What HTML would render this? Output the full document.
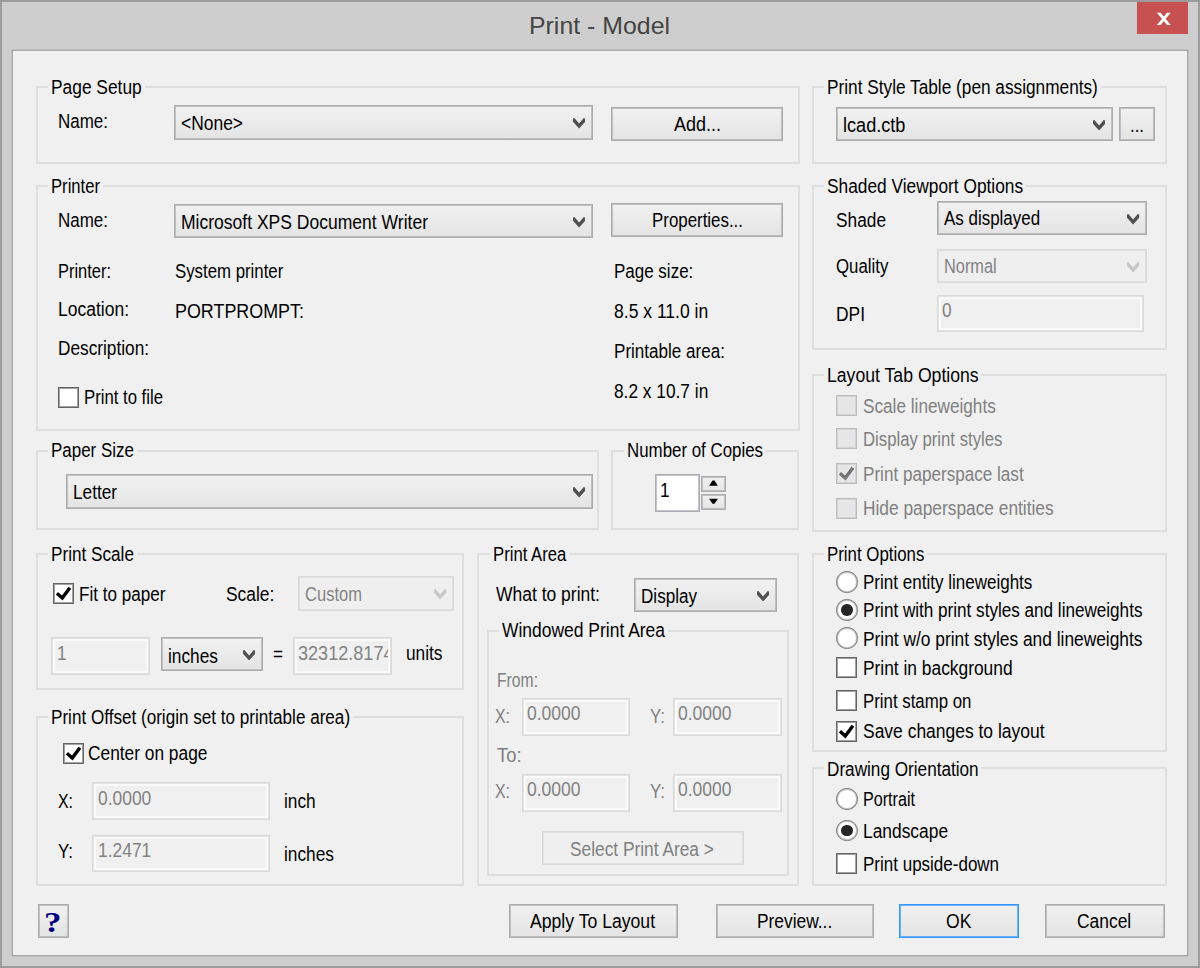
<!DOCTYPE html>
<html><head><meta charset="utf-8"><title>Print - Model</title>
<style>
html,body{margin:0;padding:0}
body{width:1200px;height:968px;overflow:hidden;position:relative;background:#cecece;font-family:"Liberation Sans",sans-serif;font-size:20px;line-height:1}
div,span.t,span.q{position:absolute;box-sizing:border-box}
.win{left:0;top:0;width:1200px;height:968px;border:2px solid #9c9c9c;border-top-width:2px;background:#cecece}
.content{left:12px;top:50px;width:1176px;height:906px;background:#f0f0f0;border:1px solid #a8a8a8;box-shadow:0 0 0 1px rgba(150,150,150,.3)}
.t{white-space:nowrap;transform-origin:0 0;color:#000}
.ttl{letter-spacing:0}
.close{background:#c75050}
.close svg{position:absolute;left:0;top:0;width:100%;height:100%}
.sp svg{position:absolute;left:-1px;top:-1px;width:25px;height:16px}
.ck svg{position:absolute;left:-1px;top:-1px;width:21px;height:21px}
.g{border:2px solid #dedede}
.m{background:#f0f0f0}
.cb{border:1px solid #acacac;box-shadow:inset 0 0 0 1px rgba(172,172,172,.7);background:linear-gradient(#f1f1f1,#e4e4e4)}
.cb.d{border-color:#d9d9d9;background:#efefef;box-shadow:inset 0 0 0 1px rgba(217,217,217,.7)}
.cv{position:absolute;right:6.8px;top:50%;margin-top:-4.2px;width:12.2px;height:10.5px}
.b{border:1px solid #acacac;box-shadow:inset 0 0 0 1px rgba(172,172,172,.7);background:linear-gradient(#f1f1f1,#e4e4e4)}
.b.d{border-color:#d9d9d9;background:#efefef;box-shadow:inset 0 0 0 1px rgba(217,217,217,.7)}
.b.f{border-color:#3399ff;box-shadow:inset 0 0 0 1px rgba(51,153,255,.7)}
.e{border:1px solid #abadb3;background:#fff;box-shadow:inset 0 0 0 1px rgba(171,173,179,.7)}
.e.d{border:1px solid #d9d9d9;background:#f0f0f0;box-shadow:inset 0 0 0 1px rgba(217,217,217,.7),inset 0 0 0 3px #fafafa}
.sp{border:1px solid #acacac;box-shadow:inset 0 0 0 1px rgba(172,172,172,.7);background:linear-gradient(#f1f1f1,#e4e4e4)}
.ck{border:1px solid #646464;background:#fff;box-shadow:inset 0 0 0 1px rgba(100,100,100,.6)}
.ck.d{border-color:#bcbcbc;background:#e6e6e6;box-shadow:inset 0 0 0 1px rgba(188,188,188,.45)}
.rd{border:1px solid #707070;background:#fff;border-radius:50%;box-shadow:inset 0 0 0 1px rgba(112,112,112,.45)}
.rd i{position:absolute;left:4px;top:4px;width:11.5px;height:11.5px;border-radius:50%;background:#262626}
.q{font-family:"Liberation Serif",serif;font-weight:bold;font-size:29px;color:#000080;line-height:1;transform-origin:0 0;transform:scaleX(1.2)}
</style></head>
<body>
<div class="win"></div>
<div class="content"></div>
<div class="close" style="left:1137.0px;top:2.0px;width:51.3px;height:32.0px;"><svg viewBox="0 0 51.3 32"><path d="M19.9 10.75 L23.6 10.75 L33.7 23 L30 23 Z M30 10.75 L33.7 10.75 L23.6 23 L19.9 23 Z" fill="#fff"/></svg></div>
<span class="t ttl" style="left:529.0px;top:14.9px;transform:scaleX(1.050);color:#444;font-size:23.7px;">Print - Model</span>
<div class="g" style="left:36.0px;top:86.0px;width:764.0px;height:78.0px;"></div>
<div class="m" style="left:48.0px;top:85.0px;width:96.7px;height:4.0px;"></div>
<span class="t" style="left:51.0px;top:76.6px;transform:scaleX(0.868);">Page Setup</span>
<span class="t" style="left:58.0px;top:111.3px;transform:scaleX(0.849);">Name:</span>
<div class="cb" style="left:174.0px;top:105.0px;width:418.5px;height:35.0px;"><svg class="cv" viewBox="0 0 7 6"><path d="M0 0.3 L0.8 0 L3.5 3.1 L6.2 0 L7 0.3 L7 2.1 L3.5 6 L0 2.1 Z" fill="#505050"/></svg></div>
<span class="t" style="left:181.0px;top:113.1px;transform:scaleX(0.871);">&lt;None&gt;</span>
<div class="b" style="left:610.7px;top:107.3px;width:172.6px;height:33.7px;"></div>
<span class="t" style="left:673.5px;top:114.1px;transform:scaleX(0.899);">Add...</span>
<div class="g" style="left:36.0px;top:185.0px;width:764.0px;height:246.0px;"></div>
<div class="m" style="left:48.0px;top:184.0px;width:55.0px;height:4.0px;"></div>
<span class="t" style="left:51.0px;top:175.6px;transform:scaleX(0.832);">Printer</span>
<span class="t" style="left:58.0px;top:210.1px;transform:scaleX(0.849);">Name:</span>
<div class="cb" style="left:174.0px;top:204.0px;width:418.5px;height:34.4px;"><svg class="cv" viewBox="0 0 7 6"><path d="M0 0.3 L0.8 0 L3.5 3.1 L6.2 0 L7 0.3 L7 2.1 L3.5 6 L0 2.1 Z" fill="#505050"/></svg></div>
<span class="t" style="left:181.0px;top:211.7px;transform:scaleX(0.876);">Microsoft XPS Document Writer</span>
<div class="b" style="left:610.7px;top:202.7px;width:172.6px;height:34.0px;"></div>
<span class="t" style="left:651.5px;top:209.5px;transform:scaleX(0.844);">Properties...</span>
<span class="t" style="left:58.0px;top:260.8px;transform:scaleX(0.822);">Printer:</span>
<span class="t" style="left:175.0px;top:260.8px;transform:scaleX(0.840);">System printer</span>
<span class="t" style="left:58.0px;top:299.1px;transform:scaleX(0.875);">Location:</span>
<span class="t" style="left:175.0px;top:300.6px;transform:scaleX(0.895);">PORTPROMPT:</span>
<span class="t" style="left:58.0px;top:338.1px;transform:scaleX(0.862);">Description:</span>
<div class="ck" style="left:58.0px;top:387.0px;width:21.0px;height:21.0px;"></div>
<span class="t" style="left:84.3px;top:387.4px;transform:scaleX(0.836);">Print to file</span>
<span class="t" style="left:614.0px;top:260.8px;transform:scaleX(0.849);">Page size:</span>
<span class="t" style="left:614.0px;top:300.8px;transform:scaleX(0.877);">8.5 x 11.0 in</span>
<span class="t" style="left:614.0px;top:341.4px;transform:scaleX(0.853);">Printable area:</span>
<span class="t" style="left:614.0px;top:380.8px;transform:scaleX(0.865);">8.2 x 10.7 in</span>
<div class="g" style="left:36.0px;top:450.0px;width:563.0px;height:80.0px;"></div>
<div class="m" style="left:48.0px;top:449.0px;width:89.0px;height:4.0px;"></div>
<span class="t" style="left:51.0px;top:440.4px;transform:scaleX(0.848);">Paper Size</span>
<div class="cb" style="left:65.5px;top:474.0px;width:527.0px;height:34.6px;"><svg class="cv" viewBox="0 0 7 6"><path d="M0 0.3 L0.8 0 L3.5 3.1 L6.2 0 L7 0.3 L7 2.1 L3.5 6 L0 2.1 Z" fill="#505050"/></svg></div>
<span class="t" style="left:72.5px;top:481.9px;transform:scaleX(0.860);">Letter</span>
<div class="g" style="left:611.0px;top:450.0px;width:188.0px;height:80.0px;"></div>
<div class="m" style="left:623.7px;top:449.0px;width:142.0px;height:4.0px;"></div>
<span class="t" style="left:626.7px;top:440.4px;transform:scaleX(0.844);">Number of Copies</span>
<div class="e" style="left:655.0px;top:474.0px;width:44.7px;height:38.0px;"></div>
<span class="t" style="left:660.3px;top:480.0px;transform:scaleX(0.865);">1</span>
<div class="sp" style="left:701.0px;top:476.0px;width:25.0px;height:16.0px;"><svg viewBox="0 0 25 16"><path d="M8.1 9.7 L11.5 4.4 L13.5 4.4 L16.9 9.7 Z" fill="#000"/></svg></div>
<div class="sp" style="left:701.0px;top:494.0px;width:25.0px;height:16.0px;"><svg viewBox="0 0 25 16"><path d="M8.1 4.75 L16.9 4.75 L13.5 9.75 L11.5 9.75 Z" fill="#000"/></svg></div>
<div class="g" style="left:36.0px;top:553.0px;width:428.0px;height:137.0px;"></div>
<div class="m" style="left:48.0px;top:552.0px;width:89.0px;height:4.0px;"></div>
<span class="t" style="left:51.0px;top:544.1px;transform:scaleX(0.858);">Print Scale</span>
<div class="ck" style="left:53.0px;top:583.0px;width:21.0px;height:21.0px;"><svg viewBox="0 0 21 21"><path d="M3.9 10.3 L9.3 15 L16.9 4.7" fill="none" stroke="#000" stroke-width="3.4"/></svg></div>
<span class="t" style="left:79.3px;top:583.8px;transform:scaleX(0.854);">Fit to paper</span>
<span class="t" style="left:226.0px;top:583.8px;transform:scaleX(0.869);">Scale:</span>
<div class="cb d" style="left:298.0px;top:576.3px;width:156.4px;height:34.4px;"><svg class="cv" viewBox="0 0 7 6"><path d="M0 0.3 L0.8 0 L3.5 3.1 L6.2 0 L7 0.3 L7 2.1 L3.5 6 L0 2.1 Z" fill="#c8c8c8"/></svg></div>
<span class="t" style="left:305.0px;top:584.3px;transform:scaleX(0.827);color:#838383;">Custom</span>
<div class="e d" style="left:51.0px;top:637.0px;width:98.6px;height:38.0px;"></div>
<span class="t" style="left:56.6px;top:642.7px;transform:scaleX(0.865);color:#838383;">1</span>
<div class="cb" style="left:161.4px;top:637.3px;width:101.8px;height:33.7px;"><svg class="cv" viewBox="0 0 7 6"><path d="M0 0.3 L0.8 0 L3.5 3.1 L6.2 0 L7 0.3 L7 2.1 L3.5 6 L0 2.1 Z" fill="#505050"/></svg></div>
<span class="t" style="left:168.4px;top:646.1px;transform:scaleX(0.865);"></span>
<span class="t" style="left:167.5px;top:646.1px;transform:scaleX(0.865);">inches</span>
<span class="t" style="left:273.3px;top:644.3px;transform:scaleX(0.856);">=</span>
<div class="e d" style="left:293.0px;top:637.0px;width:99.0px;height:38.0px;"></div>
<span class="t" style="left:298.3px;top:643.1px;transform:scaleX(0.865);color:#838383;"></span>
<div style="left:296px;top:640px;width:92.3px;height:32px;overflow:hidden">
<span class="t" style="left:2.3px;top:2.5px;transform:scaleX(0.904);color:#838383;">32312.8174</span>
</div>
<span class="t" style="left:405.7px;top:643.3px;transform:scaleX(0.864);">units</span>
<div class="g" style="left:36.0px;top:716.0px;width:428.0px;height:170.0px;"></div>
<div class="m" style="left:48.0px;top:715.0px;width:305.0px;height:4.0px;"></div>
<span class="t" style="left:51.0px;top:707.4px;transform:scaleX(0.855);">Print Offset (origin set to printable area)</span>
<div class="ck" style="left:62.7px;top:743.0px;width:21.0px;height:21.0px;"><svg viewBox="0 0 21 21"><path d="M3.9 10.3 L9.3 15 L16.9 4.7" fill="none" stroke="#000" stroke-width="3.4"/></svg></div>
<span class="t" style="left:88.3px;top:743.1px;transform:scaleX(0.866);">Center on page</span>
<span class="t" style="left:57.7px;top:790.8px;transform:scaleX(0.794);">X:</span>
<div class="e d" style="left:92.0px;top:782.0px;width:178.0px;height:37.6px;"></div>
<span class="t" style="left:97.5px;top:787.6px;transform:scaleX(0.871);color:#838383;">0.0000</span>
<span class="t" style="left:284.3px;top:790.8px;transform:scaleX(0.864);">inch</span>
<span class="t" style="left:57.7px;top:840.6px;transform:scaleX(0.843);">Y:</span>
<div class="e d" style="left:92.0px;top:835.0px;width:178.0px;height:37.0px;"></div>
<span class="t" style="left:97.5px;top:840.4px;transform:scaleX(0.871);color:#838383;">1.2471</span>
<span class="t" style="left:284.3px;top:843.8px;transform:scaleX(0.865);">inches</span>
<div class="g" style="left:477.0px;top:553.0px;width:322.0px;height:333.0px;"></div>
<div class="m" style="left:489.7px;top:552.0px;width:79.3px;height:4.0px;"></div>
<span class="t" style="left:492.7px;top:544.1px;transform:scaleX(0.835);">Print Area</span>
<span class="t" style="left:496.0px;top:583.8px;transform:scaleX(0.874);">What to print:</span>
<div class="cb" style="left:633.7px;top:578.0px;width:143.3px;height:34.0px;"><svg class="cv" viewBox="0 0 7 6"><path d="M0 0.3 L0.8 0 L3.5 3.1 L6.2 0 L7 0.3 L7 2.1 L3.5 6 L0 2.1 Z" fill="#505050"/></svg></div>
<span class="t" style="left:640.7px;top:585.9px;transform:scaleX(0.854);">Display</span>
<div class="g" style="left:487.0px;top:630.0px;width:302.0px;height:246.0px;"></div>
<div class="m" style="left:499.4px;top:629.0px;width:169.0px;height:4.0px;"></div>
<span class="t" style="left:502.4px;top:620.3px;transform:scaleX(0.873);">Windowed Print Area</span>
<span class="t" style="left:496.6px;top:669.8px;transform:scaleX(0.785);color:#808080;">From:</span>
<span class="t" style="left:495.0px;top:705.5px;transform:scaleX(0.794);color:#808080;">X:</span>
<div class="e d" style="left:521.5px;top:698.0px;width:108.9px;height:38.0px;"></div>
<span class="t" style="left:527.2px;top:703.3px;transform:scaleX(0.876);color:#838383;">0.0000</span>
<span class="t" style="left:649.6px;top:705.5px;transform:scaleX(0.843);color:#808080;">Y:</span>
<div class="e d" style="left:672.6px;top:698.0px;width:109.4px;height:38.0px;"></div>
<span class="t" style="left:678.4px;top:703.3px;transform:scaleX(0.876);color:#838383;">0.0000</span>
<span class="t" style="left:496.6px;top:744.8px;transform:scaleX(0.918);color:#808080;">To:</span>
<span class="t" style="left:495.0px;top:781.1px;transform:scaleX(0.794);color:#808080;">X:</span>
<div class="e d" style="left:521.5px;top:774.0px;width:108.9px;height:37.8px;"></div>
<span class="t" style="left:527.2px;top:779.1px;transform:scaleX(0.876);color:#838383;">0.0000</span>
<span class="t" style="left:649.6px;top:781.1px;transform:scaleX(0.843);color:#808080;">Y:</span>
<div class="e d" style="left:672.6px;top:774.0px;width:109.4px;height:37.8px;"></div>
<span class="t" style="left:678.4px;top:779.1px;transform:scaleX(0.876);color:#838383;">0.0000</span>
<div class="b d" style="left:541.5px;top:831.4px;width:202.0px;height:34.1px;"></div>
<span class="t" style="left:570.0px;top:838.7px;transform:scaleX(0.866);color:#808080;">Select Print Area &gt;</span>
<div class="g" style="left:812.0px;top:86.0px;width:355.0px;height:78.0px;"></div>
<div class="m" style="left:823.7px;top:85.0px;width:277.0px;height:4.0px;"></div>
<span class="t" style="left:826.7px;top:76.6px;transform:scaleX(0.862);">Print Style Table (pen assignments)</span>
<div class="cb" style="left:835.7px;top:107.0px;width:277.0px;height:34.0px;"><svg class="cv" viewBox="0 0 7 6"><path d="M0 0.3 L0.8 0 L3.5 3.1 L6.2 0 L7 0.3 L7 2.1 L3.5 6 L0 2.1 Z" fill="#505050"/></svg></div>
<span class="t" style="left:842.7px;top:114.8px;transform:scaleX(0.905);">lcad.ctb</span>
<div class="b" style="left:1119.3px;top:107.0px;width:36.0px;height:34.0px;"></div>
<span class="t" style="left:1130.3px;top:114.6px;transform:scaleX(0.840);">...</span>
<div class="g" style="left:812.0px;top:185.0px;width:355.0px;height:165.0px;"></div>
<div class="m" style="left:823.7px;top:184.0px;width:202.0px;height:4.0px;"></div>
<span class="t" style="left:826.7px;top:175.8px;transform:scaleX(0.866);">Shaded Viewport Options</span>
<span class="t" style="left:836.0px;top:209.8px;transform:scaleX(0.865);">Shade</span>
<div class="cb" style="left:937.0px;top:201.4px;width:210.3px;height:33.9px;"><svg class="cv" viewBox="0 0 7 6"><path d="M0 0.3 L0.8 0 L3.5 3.1 L6.2 0 L7 0.3 L7 2.1 L3.5 6 L0 2.1 Z" fill="#505050"/></svg></div>
<span class="t" style="left:944.0px;top:208.1px;transform:scaleX(0.847);">As displayed</span>
<span class="t" style="left:836.0px;top:255.8px;transform:scaleX(0.840);">Quality</span>
<div class="cb d" style="left:937.0px;top:249.0px;width:210.3px;height:34.0px;"><svg class="cv" viewBox="0 0 7 6"><path d="M0 0.3 L0.8 0 L3.5 3.1 L6.2 0 L7 0.3 L7 2.1 L3.5 6 L0 2.1 Z" fill="#c8c8c8"/></svg></div>
<span class="t" style="left:944.0px;top:255.8px;transform:scaleX(0.818);color:#838383;">Normal</span>
<span class="t" style="left:836.0px;top:303.8px;transform:scaleX(0.870);">DPI</span>
<div class="e d" style="left:937.0px;top:295.3px;width:207.0px;height:37.0px;"></div>
<span class="t" style="left:942.0px;top:300.4px;transform:scaleX(0.865);color:#838383;">0</span>
<div class="g" style="left:812.0px;top:374.0px;width:355.0px;height:158.0px;"></div>
<div class="m" style="left:823.7px;top:373.0px;width:157.6px;height:4.0px;"></div>
<span class="t" style="left:826.7px;top:364.8px;transform:scaleX(0.882);">Layout Tab Options</span>
<div class="ck d" style="left:836.0px;top:395.3px;width:21.0px;height:21.0px;"></div>
<span class="t" style="left:863.3px;top:395.8px;transform:scaleX(0.859);color:#808080;">Scale lineweights</span>
<div class="ck d" style="left:836.0px;top:428.3px;width:21.0px;height:21.0px;"></div>
<span class="t" style="left:863.3px;top:429.1px;transform:scaleX(0.836);color:#808080;">Display print styles</span>
<div class="ck d" style="left:836.0px;top:463.0px;width:21.0px;height:21.0px;"><svg viewBox="0 0 21 21"><path d="M3.9 10.3 L9.3 15 L16.9 4.7" fill="none" stroke="#747474" stroke-width="3.4"/></svg></div>
<span class="t" style="left:863.3px;top:463.8px;transform:scaleX(0.855);color:#808080;">Print paperspace last</span>
<div class="ck d" style="left:836.0px;top:497.5px;width:21.0px;height:21.0px;"></div>
<span class="t" style="left:863.3px;top:497.6px;transform:scaleX(0.866);color:#808080;">Hide paperspace entities</span>
<div class="g" style="left:812.0px;top:553.0px;width:355.0px;height:199.0px;"></div>
<div class="m" style="left:823.7px;top:552.0px;width:103.3px;height:4.0px;"></div>
<span class="t" style="left:826.7px;top:544.1px;transform:scaleX(0.842);">Print Options</span>
<div class="rd" style="left:836.0px;top:571.0px;width:21.5px;height:21.5px;"></div>
<span class="t" style="left:863.3px;top:572.1px;transform:scaleX(0.851);">Print entity lineweights</span>
<div class="rd" style="left:836.0px;top:599.2px;width:21.5px;height:21.5px;"><i></i></div>
<span class="t" style="left:863.3px;top:600.4px;transform:scaleX(0.855);">Print with print styles and lineweights</span>
<div class="rd" style="left:836.0px;top:627.1px;width:21.5px;height:21.5px;"></div>
<span class="t" style="left:863.3px;top:628.8px;transform:scaleX(0.867);">Print w/o print styles and lineweights</span>
<div class="ck" style="left:836.0px;top:657.0px;width:21.0px;height:21.0px;"></div>
<span class="t" style="left:863.3px;top:658.0px;transform:scaleX(0.868);">Print in background</span>
<div class="ck" style="left:836.0px;top:690.0px;width:21.0px;height:21.0px;"></div>
<span class="t" style="left:863.3px;top:690.9px;transform:scaleX(0.841);">Print stamp on</span>
<div class="ck" style="left:836.0px;top:721.4px;width:21.0px;height:21.0px;"><svg viewBox="0 0 21 21"><path d="M3.9 10.3 L9.3 15 L16.9 4.7" fill="none" stroke="#000" stroke-width="3.4"/></svg></div>
<span class="t" style="left:863.3px;top:721.4px;transform:scaleX(0.873);">Save changes to layout</span>
<div class="g" style="left:812.0px;top:767.0px;width:355.0px;height:119.0px;"></div>
<div class="m" style="left:823.7px;top:766.0px;width:157.6px;height:4.0px;"></div>
<span class="t" style="left:826.7px;top:758.7px;transform:scaleX(0.858);">Drawing Orientation</span>
<div class="rd" style="left:836.0px;top:788.4px;width:21.5px;height:21.5px;"></div>
<span class="t" style="left:863.3px;top:789.2px;transform:scaleX(0.807);">Portrait</span>
<div class="rd" style="left:836.0px;top:819.7px;width:21.5px;height:21.5px;"><i></i></div>
<span class="t" style="left:863.3px;top:820.7px;transform:scaleX(0.869);">Landscape</span>
<div class="ck" style="left:836.0px;top:853.0px;width:21.0px;height:21.0px;"></div>
<span class="t" style="left:863.3px;top:853.6px;transform:scaleX(0.850);">Print upside-down</span>
<div class="b" style="left:38.3px;top:904.0px;width:30.7px;height:34.0px;"></div>
<span class="q" style="left:44.4px;top:908px">?</span>
<div class="b" style="left:508.7px;top:904.0px;width:169.1px;height:34.0px;"></div>
<span class="t" style="left:530.0px;top:911.3px;transform:scaleX(0.881);">Apply To Layout</span>
<div class="b" style="left:716.3px;top:904.0px;width:157.5px;height:34.0px;"></div>
<span class="t" style="left:756.5px;top:911.3px;transform:scaleX(0.868);">Preview...</span>
<div class="b f" style="left:899.0px;top:904.0px;width:119.6px;height:34.0px;"></div>
<span class="t" style="left:945.8px;top:911.3px;transform:scaleX(0.879);">OK</span>
<div class="b" style="left:1045.4px;top:904.0px;width:119.7px;height:34.0px;"></div>
<span class="t" style="left:1077.3px;top:911.3px;transform:scaleX(0.871);">Cancel</span>
</body></html>
